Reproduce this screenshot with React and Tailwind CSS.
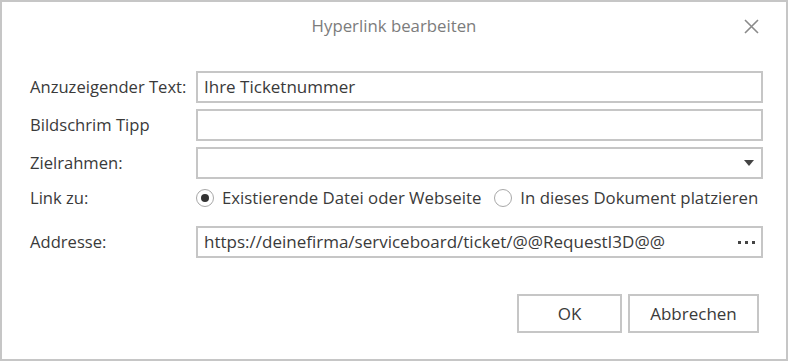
export default function App() {
  const font = { fontFamily: '"Open Sans", "Noto Sans", sans-serif' };

  return (
    <div
      className="w-[788px] h-[361px] bg-white border-2 border-[#c6c6c6] text-[#3a3a3a] flex flex-col"
      style={font}
    >
      {/* Header */}
      <div className="h-[48px] grid grid-cols-[1fr_auto_1fr] items-center">
        <div />
        <span className="text-[16.8px] text-[#7c7c7c]">Hyperlink bearbeiten</span>
        <div className="flex justify-end pr-[27px]">
          <svg width="15" height="15" viewBox="0 0 15 15">
            <path d="M1 1 L14 14 M14 1 L1 14" stroke="#8a8a8a" strokeWidth="1.6" fill="none" />
          </svg>
        </div>
      </div>

      {/* Form */}
      <div className="mt-[21px] pl-[28px] pr-[23px] flex flex-col text-[17px]">
        <div className="flex items-center h-[32px]">
          <label className="w-[166px] shrink-0 text-[16.6px]">Anzuzeigender Text:</label>
          <div className="flex-1 h-[32px] border-2 border-[#c6c6c6] flex items-center px-[6px]">
            Ihre Ticketnummer
          </div>
        </div>

        <div className="flex items-center h-[32px] mt-[6px]">
          <label className="w-[166px] shrink-0 text-[16.6px]">Bildschrim Tipp</label>
          <div className="flex-1 h-[32px] border-2 border-[#c6c6c6]" />
        </div>

        <div className="flex items-center h-[32px] mt-[6px]">
          <label className="w-[166px] shrink-0 text-[16.6px]">Zielrahmen:</label>
          <div className="flex-1 h-[32px] border-2 border-[#c6c6c6] flex items-center justify-end pr-[7px]">
            <svg width="10" height="6" viewBox="0 0 10 6">
              <path d="M0 0 H10 L5 6 Z" fill="#444444" />
            </svg>
          </div>
        </div>

        <div className="flex items-center h-[26px] mt-[6px]">
          <label className="w-[166px] shrink-0 text-[16.6px]">Link zu:</label>
          <div className="flex items-center whitespace-nowrap text-[16.8px]">
            <span className="shrink-0 w-[18px] h-[18px] rounded-full border border-[#a8a8a8] flex items-center justify-center">
              <span className="w-[8px] h-[8px] rounded-full bg-[#333333]" />
            </span>
            <span className="ml-[8px]">Existierende Datei oder Webseite</span>
            <span className="shrink-0 ml-[13px] w-[18px] h-[18px] rounded-full border border-[#a8a8a8]" />
            <span className="ml-[8px]">In dieses Dokument platzieren</span>
          </div>
        </div>

        <div className="flex items-center h-[32px] mt-[15px]">
          <label className="w-[166px] shrink-0 text-[16.6px]">Addresse:</label>
          <div className="flex-1 h-[32px] border-2 border-[#c6c6c6] flex items-center justify-between pl-[6px] pr-[6px]">
            <span className="whitespace-nowrap">https://deinefirma/serviceboard/ticket/@@RequestI3D@@</span>
            <span className="flex gap-[4px]">
              <span className="w-[3px] h-[3px] bg-[#444444]" />
              <span className="w-[3px] h-[3px] bg-[#444444]" />
              <span className="w-[3px] h-[3px] bg-[#444444]" />
            </span>
          </div>
        </div>
      </div>

      {/* Buttons */}
      <div className="mt-[36px] pr-[27px] flex justify-end gap-[6px] text-[17px]">
        <button className="w-[105px] h-[39px] border-2 border-[#c6c6c6] bg-white">OK</button>
        <button className="w-[131px] h-[39px] border-2 border-[#c6c6c6] bg-white">Abbrechen</button>
      </div>
    </div>
  );
}
